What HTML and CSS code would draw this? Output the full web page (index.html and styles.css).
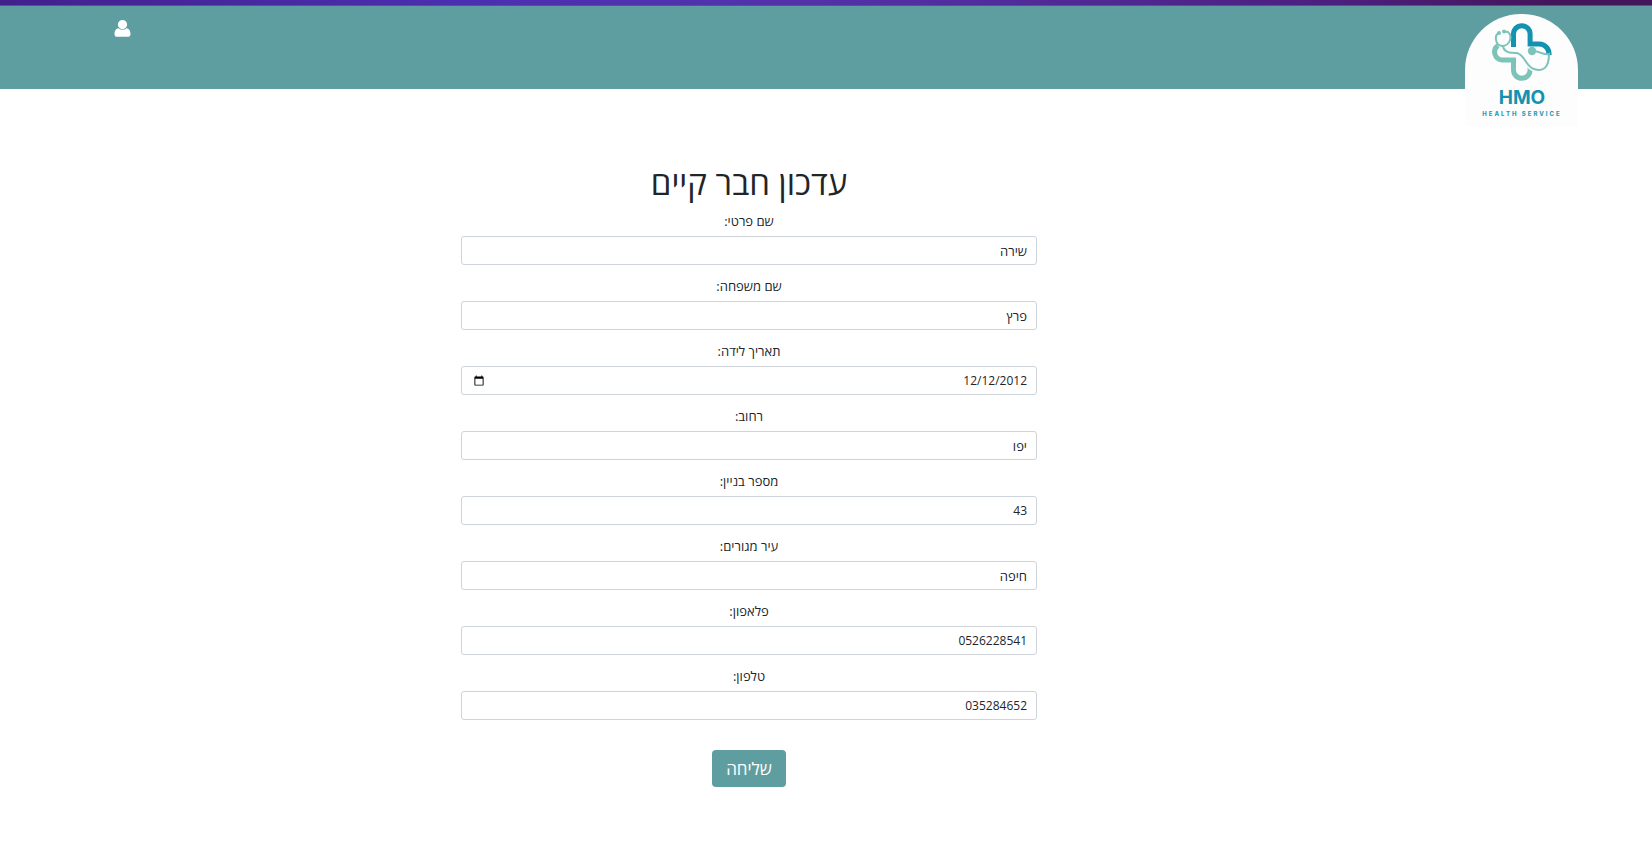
FILE: index.html
```
<!DOCTYPE html>
<html lang="he" dir="rtl">
<head>
<meta charset="utf-8">
<title>עדכון חבר קיים</title>
<link rel="stylesheet" href="styles.css">
</head>
<body>
<div class="top-strip"></div>
<header class="site-header">
  <a class="logo" href="#" aria-label="HMO Health Service">
    <svg class="logo-art" viewBox="0 0 113 112" role="img" aria-hidden="true">
      <g fill="none" stroke-width="5">
        <path stroke="#1492b0" d="M48.500 33V20a8.300 8.300 0 0 1 16.600 0V30H74a10 10 0 0 1 10 11"/>
        <path stroke="#7cc4ba" d="M33 31.500a8 8 0 0 0 4 14.500H48.500V56a8.300 8.300 0 0 0 16.600 0v-3"/>
        <path stroke="#fdfdfd" d="M38 32c1 7 8 7 14 7 8 2 9 14 17 16"/>
        <path stroke="#7cc4ba" stroke-width="2" d="M34 19c-5 2-4 12 3 13 8 0 11-10 6-14l-4-.5M38 32c1 7 8 7 14 7 8 2 9 14 17 16 9 3 15-1 15-15-5 2-8-3-17-3"/>
      </g>
      <g fill="#7cc4ba"><circle cx="34" cy="19" r="2"/><circle cx="39" cy="17.500" r="2"/><circle cx="67" cy="37" r="4.200"/></g>
      <text class="logo-name" x="57" y="90" text-anchor="middle" direction="ltr">HMO</text>
      <text class="logo-tag" x="57" y="102" text-anchor="middle" direction="ltr">HEALTH SERVICE</text>
    </svg>
  </a>
  <button class="user-button" type="button" aria-label="משתמש">
    <svg class="user-icon" viewBox="0 0 16 18" aria-hidden="true">
      <path d="M8 0a4.600 4.600 0 0 1 0 9.200A4.600 4.600 0 0 1 8 0M4 8.200a5.900 5.900 0 0 0 8 0c3 .3 4 3.200 4 6 0 1.600-1.200 2.600-2.800 2.600H2.800C1.200 16.800 0 15.800 0 14.200c0-2.800 1-5.700 4-6"/>
    </svg>
  </button>
</header>
<main class="page">
  <form class="member-form">
    <h1 class="title">עדכון חבר קיים</h1>
    <div class="field"><label for="first">שם פרטי:</label><input id="first" type="text" value="שירה"></div>
    <div class="field"><label for="last">שם משפחה:</label><input id="last" type="text" value="פרץ"></div>
    <div class="field"><label for="birth">תאריך לידה:</label><input id="birth" class="numeric" type="date" value="2012-12-12"></div>
    <div class="field"><label for="street">רחוב:</label><input id="street" type="text" value="יפו"></div>
    <div class="field"><label for="building">מספר בניין:</label><input id="building" class="numeric" type="text" value="43"></div>
    <div class="field"><label for="city">עיר מגורים:</label><input id="city" type="text" value="חיפה"></div>
    <div class="field"><label for="mobile">פלאפון:</label><input id="mobile" class="numeric" type="text" value="0526228541"></div>
    <div class="field"><label for="phone">טלפון:</label><input id="phone" class="numeric" type="text" value="035284652"></div>
    <button class="submit" type="button">שליחה</button>
  </form>
</main>
</body>
</html>
```
FILE: styles.css
```
* { box-sizing: border-box; }
body {
  margin: 0;
  background: #fff;
  color: #212529;
  font-family: "Open Sans", "Noto Sans", "DejaVu Sans", sans-serif;
}
.top-strip {
  height: 6px;
  border-bottom: 1px solid #7040a8;
  background: linear-gradient(90deg, #42208c, #4c2fb0 28%, #5232ac 45%, #522c9c 60%, #4c2080 80%, #44165c 94%, #44165c);
}
.site-header {
  display: flex;
  justify-content: space-between;
  align-items: flex-start;
  height: 83px;
  padding: 8px 74px 0 114px;
  background: #5f9ea0;
}
.logo {
  width: 113px;
  height: 112px;
  border-radius: 56px 56px 0 0;
  background: #fdfdfd;
}
.logo-art { display: block; width: 100%; }
.logo-name { font: 700 19px Inter, sans-serif; fill: #1492b0; }
.logo-tag { font: 800 6px Inter, sans-serif; letter-spacing: 2px; fill: #2a9db6; }
.user-button {
  margin-top: 6px;
  padding: 0;
  border: 0;
  background: none;
}
.user-icon { display: block; width: 17px; height: 18px; fill: #fff; }
.page {
  display: grid;
  grid-template-columns: 615fr 576fr 461fr;
  padding: 72px 0 48px;
}
.member-form {
  grid-column: 2;
  display: flex;
  flex-direction: column;
  align-items: center;
}
.title {
  margin: 0 0 8px;
  font-size: 33px;
  font-weight: 500;
  line-height: 43px;
}
.field {
  display: flex;
  flex-direction: column;
  width: 100%;
  margin-bottom: 12px;
  text-align: center;
  font-size: 13px;
}
.field label { margin-bottom: 6px; line-height: 18px; }
.field input {
  width: 100%;
  height: 29px;
  padding: 4px 9px;
  border: 1px solid #ced4da;
  border-radius: 3px;
  background: #fff;
  color: #212529;
  font-family: inherit;
  font-size: 13px;
  text-align: right;
}
.field .numeric { font-size: 12px; }
.numeric::-webkit-datetime-edit { flex: 1; padding: 0; }
.numeric::-webkit-datetime-edit-month-field,
.numeric::-webkit-datetime-edit-day-field,
.numeric::-webkit-datetime-edit-year-field { padding: 0; }
.numeric::-webkit-calendar-picker-indicator { order: -1; margin: 0; }
.submit {
  margin-top: 18px;
  padding: 6px 14px;
  border: 0;
  border-radius: 4px;
  background: #5f9ea0;
  color: #fff;
  font-family: inherit;
  font-size: 17px;
  line-height: 25px;
}
```
